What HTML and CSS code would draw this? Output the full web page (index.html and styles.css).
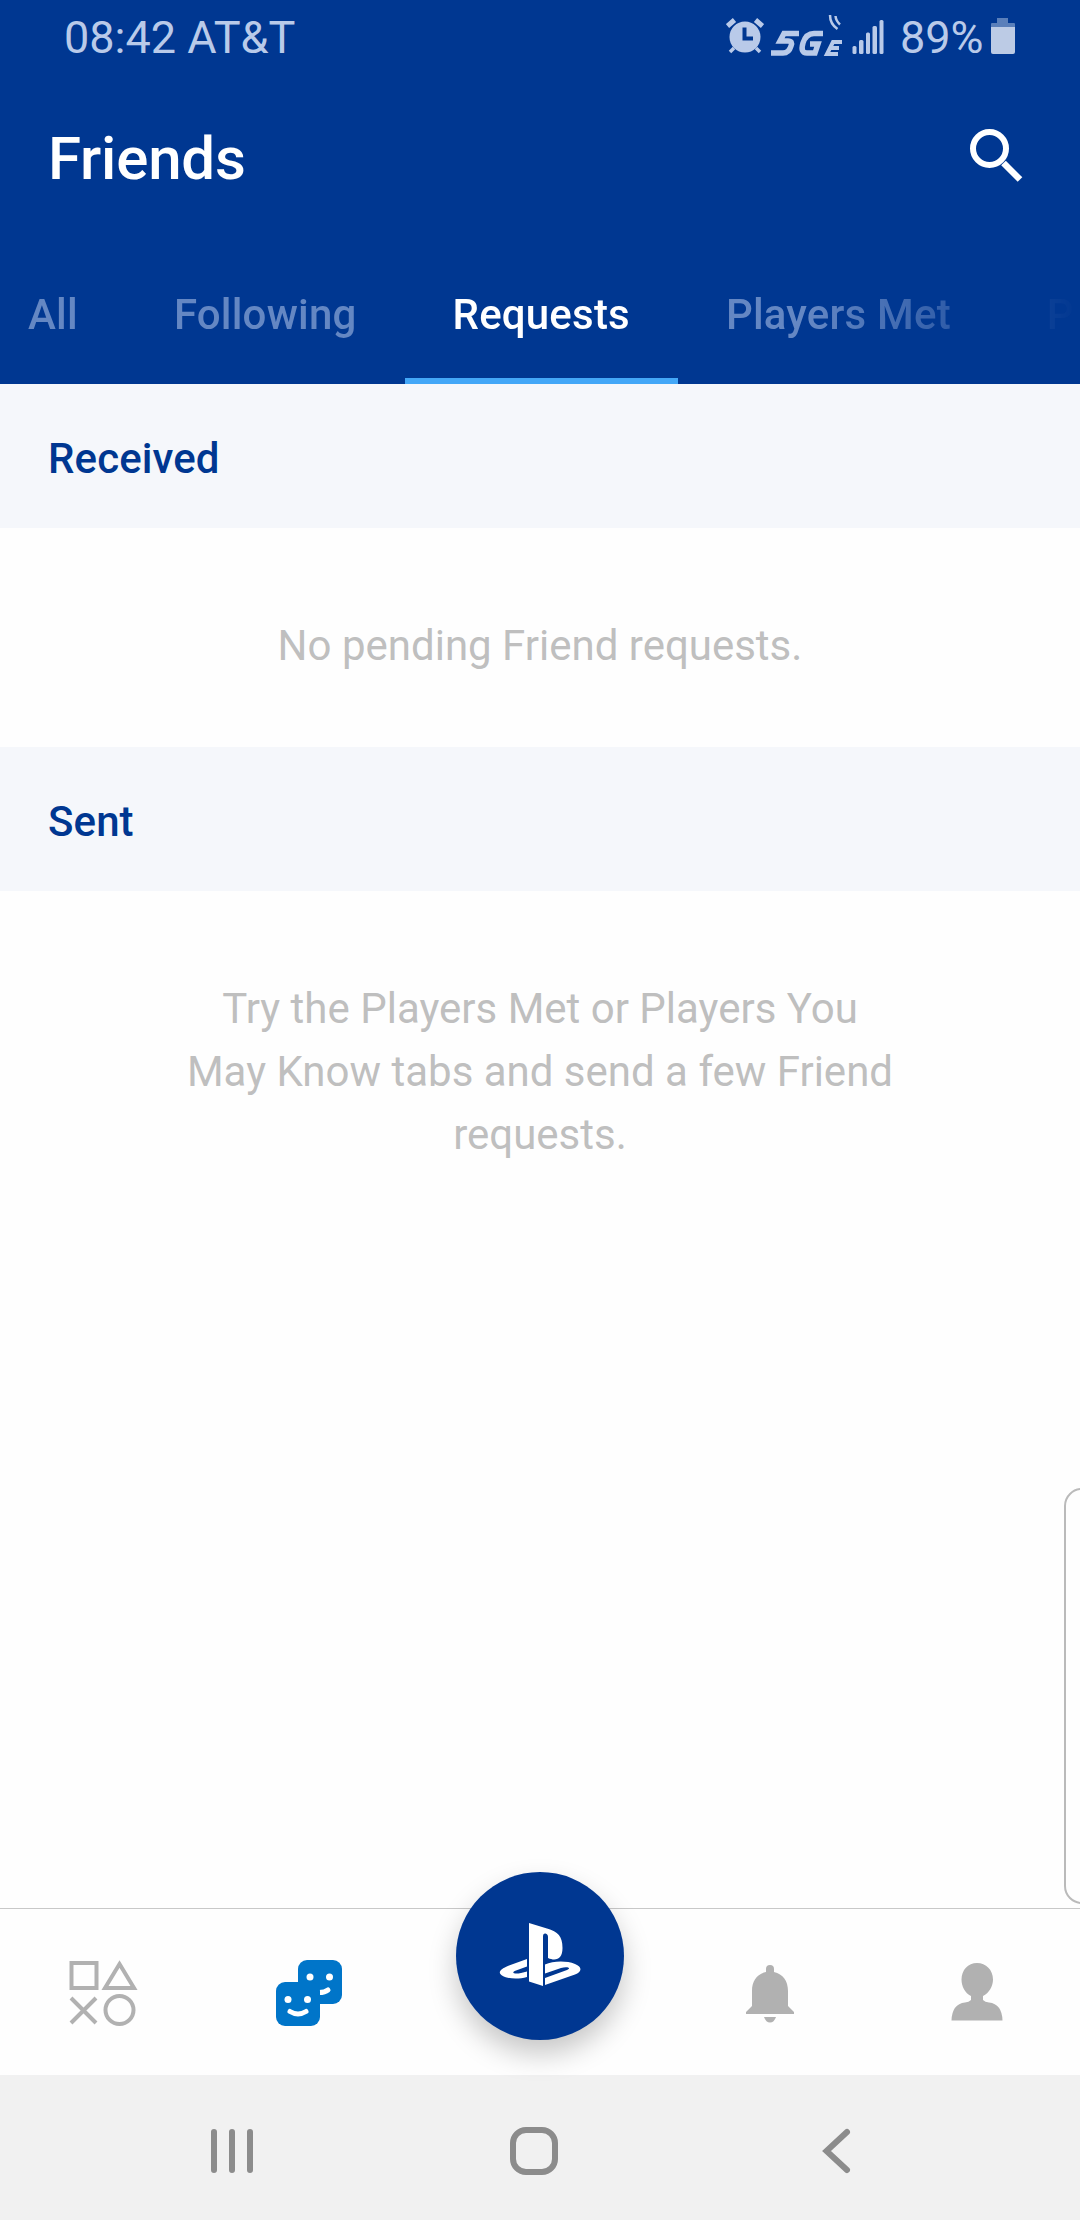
FILE: index.html
```
<!DOCTYPE html>
<html lang="en">
<head>
    <meta charset="UTF-8">
    <meta name="viewport" content="width=device-width, initial-scale=1.0">
    <title>Friends</title>
    <link rel="stylesheet" href="styles.css">
</head>
<body>
    <div class="app">
        <header class="header">
            <div class="status-bar">
                <span class="status-text">08:42 AT&amp;T</span>
                <div class="status-icons">
                    <svg class="alarm-icon" width="38" height="36" viewBox="0 0 38 36">
                        <path d="M1.500 8L8.500 2M29.500 2l7 6" stroke="#b9cae9" stroke-width="5"/>
                        <path d="M8 30l-4 4M30 30l4 4" stroke="#b9cae9" stroke-width="3.5"/>
                        <circle cx="19" cy="19" r="15.5" fill="#b9cae9"/>
                        <path d="M18.5 9.500v11H27" fill="none" stroke="#003791" stroke-width="4"/>
                    </svg>
                    <svg class="network-icon" width="74" height="42" viewBox="0 0 74 42">
                        <g fill="none" stroke="#b9cae9" stroke-width="5.500">
                            <path d="M28 18.500H13L9 26H17Q22 26 20 31Q18 38 12 38H0"/>
                            <path d="M52 18.500H43Q35 18.500 32 28Q29 38 36 38H44L47 29H39"/>
                        </g>
                        <path d="M71 27H62L56 39H67M59 33H68" fill="none" stroke="#b9cae9" stroke-width="4"/>
                        <path d="M59 0Q59 9 66.500 14M64.500 1Q65 6 69 9.500" fill="none" stroke="#b9cae9" stroke-width="2.500"/>
                    </svg>
                    <svg class="signal-icon" width="32" height="36" viewBox="0 0 32 36">
                        <g fill="#b9cae9">
                            <rect x="0.500" y="27" width="4" height="8" rx="1.500"/>
                            <rect x="7" y="21" width="4.500" height="14" rx="1.500"/>
                            <rect x="14" y="13.500" width="4" height="21.500" rx="1.500"/>
                            <rect x="20.500" y="7" width="4.500" height="28" rx="1.500"/>
                            <rect x="27.500" y="1" width="4" height="34" rx="1.500"/>
                        </g>
                    </svg>
                    <span class="status-text battery-text">89%</span>
                    <svg class="battery-icon" width="24" height="36" viewBox="0 0 24 36">
                        <path d="M6 0h11v5h6a1 1 0 0 1 1 1v3H0V6a1 1 0 0 1 1-1h5z" fill="#5a7fba"/>
                        <path d="M0 9h24v25a2 2 0 0 1-2 2H2a2 2 0 0 1-2-2z" fill="#bccbe5"/>
                    </svg>
                </div>
            </div>

            <div class="title-bar">
                <h1>Friends</h1>
                <svg class="search-icon" width="54" height="54" viewBox="0 0 54 54">
                    <circle cx="19.500" cy="19.500" r="16.500" fill="none" stroke="#fff" stroke-width="6"/>
                    <path d="M33.500 34L50 50.500" stroke="#fff" stroke-width="6.500"/>
                </svg>
            </div>

            <nav class="tabs">
                <a class="tab">All</a>
                <a class="tab">Following</a>
                <a class="tab active">Requests</a>
                <a class="tab">Players Met</a>
                <a class="tab">Players You May Know</a>
            </nav>
        </header>

        <main class="content">
            <h2 class="section-title">Received</h2>
            <p class="empty-text">No pending Friend requests.</p>
            <h2 class="section-title">Sent</h2>
            <p class="empty-text">Try the Players Met or Players You May Know tabs and send a few Friend requests.</p>
        </main>

        <!-- edge panel handle -->
        <div class="edge-handle"></div>

        <nav class="bottom-nav">
            <svg class="nav-shapes" width="70" height="68" viewBox="0 0 70 68">
                <g fill="none" stroke="#b1b1b1" stroke-width="4">
                    <rect x="3.500" y="3" width="25" height="25"/>
                    <path d="M51.500 4L66 28H37z"/>
                    <path d="M3 38L28 63M28 38L3 63"/>
                    <circle cx="51.500" cy="50" r="14"/>
                </g>
            </svg>
            <svg class="nav-friends" width="68" height="68" viewBox="0 0 68 68">
                <rect x="23" y="1" width="44" height="44" rx="9" fill="#0075c9"/>
                <circle cx="35" cy="18" r="3.500" fill="#fff"/>
                <circle cx="54.500" cy="18" r="3.500" fill="#fff"/>
                <path d="M44 33.500Q50 33.500 53 31" fill="none" stroke="#fff" stroke-width="5" stroke-linecap="round"/>
                <rect x="1" y="23" width="44" height="44" rx="9" fill="#0075c9"/>
                <circle cx="13" cy="40.500" r="3.500" fill="#fff"/>
                <circle cx="32.500" cy="40.500" r="3.500" fill="#fff"/>
                <path d="M15 52.500Q23 57.500 31 52.500" fill="none" stroke="#fff" stroke-width="5" stroke-linecap="round"/>
            </svg>
            <div class="ps-button">
                <svg width="82" height="64" viewBox="0 0 82 64" fill="#fff">
                    <path d="M30 0L48 5.500C59 9 63.500 13 63.500 25C63.500 36 57 38.500 49 35V14Q49 11 46.500 10.500Q44 10 44 13V63L30 58.500z"/>
                    <path d="M28 36L10 42.500C0 46.500-1 50 3 52.500C9 56 19 56.500 28 54V48.500L22 50C16 51.500 11 50 17 47.500L28 43.500z"/>
                    <path d="M46 41.500C54 38 67 37.500 76 41C84 44 82.500 49 76 51.500L46 62V55L68 47C73 45 68 43 62 45L46 50.500z"/>
                </svg>
            </div>
            <svg class="nav-bell" width="48" height="60" viewBox="0 0 48 60" fill="#b1b1b1">
                <path d="M20 8V5a4 4 0 0 1 8 0v3C37 10 42 17 42 27V42L48 48V50H0V48L6 42V27C6 17 11 10 20 8z"/>
                <path d="M18 53H30Q28 58.500 24 58.500Q20 58.500 18 53z"/>
            </svg>
            <svg class="nav-profile" width="52" height="58" viewBox="0 0 52 58" fill="#b1b1b1">
                <path d="M26 0C35 0 42 7 42 16.500C42 23.500 38 30 32 33V37Q34 39 38 39.500Q51 41 51.500 57.500H.5Q1 41 14 39.500Q18 39 20 37V33C14 30 10.500 23.500 10.500 16.500C10.500 7 17 0 26 0z"/>
            </svg>
        </nav>

        <footer class="system-nav">
            <svg width="44" height="48" viewBox="0 0 44 48">
                <path d="M4 5V43M22 5V43M40 5V43" stroke="#8c8c8c" stroke-width="6" stroke-linecap="round"/>
            </svg>
            <svg class="home-icon" width="48" height="48" viewBox="0 0 48 48">
                <rect x="3" y="3" width="42" height="42" rx="13" fill="none" stroke="#8c8c8c" stroke-width="6"/>
            </svg>
            <svg width="30" height="48" viewBox="0 0 30 48">
                <path d="M25 5L4.500 24L25 43" fill="none" stroke="#8c8c8c" stroke-width="6" stroke-linecap="round"/>
            </svg>
        </footer>
    </div>
</body>
</html>
```
FILE: styles.css
```
* {
    box-sizing: border-box;
}

body {
    margin: 0;
    background: #fefefe;
    font-family: Roboto, sans-serif;
    overflow: hidden;
}

svg {
    display: block;
    flex-shrink: 0;
}

.app {
    position: relative;
    display: flex;
    flex-direction: column;
    width: 1080px;
    height: 2220px;
}

.header {
    display: flex;
    flex-direction: column;
    height: 384px;
    background: #003791;
    color: white;
}

.status-bar {
    display: flex;
    justify-content: space-between;
    height: 74px;
    padding: 0 65px 0 64px;
}

.status-text {
    padding-top: 11px;
    font-size: 45px;
    line-height: 53px;
    color: #b9cae9;
}

.status-icons {
    display: flex;
}

.alarm-icon {
    margin: 18px 7px 0 0;
}

.network-icon {
    margin: 15px 7px 0 0;
}

.signal-icon {
    margin: 19px 16px 0 0;
}

.battery-text {
    width: 82px;
}

.battery-icon {
    margin: 18px 0 0 9px;
}

.title-bar {
    display: flex;
    justify-content: space-between;
    align-items: flex-start;
    height: 168px;
    padding: 50px 56px 0 48px;
}

h1 {
    margin: 0;
    font-size: 60px;
    font-weight: 500;
    line-height: 70px;
    letter-spacing: -0.2px;
}

.search-icon {
    margin-top: 5px;
}

.tabs {
    display: flex;
    height: 142px;
    margin-left: -20px;
    overflow: hidden;
    /* tabs fade out on the right edge */
    mask-image: linear-gradient(to right, #000 830px, transparent 1098px);
}

.tab {
    flex-shrink: 0;
    padding: 48px 48px 0;
    font-size: 42px;
    font-weight: 500;
    line-height: 50px;
    letter-spacing: 0.2px;
    white-space: nowrap;
    color: #6487c3;
}

.tab.active {
    border-bottom: 6px solid #43a7f7;
    color: white;
}

.content {
    height: 1524px;
}

.section-title {
    height: 144px;
    margin: 0;
    padding: 50px 48px 0;
    background: #f5f7fb;
    color: #003791;
    font-size: 42px;
    font-weight: 500;
    line-height: 50px;
    letter-spacing: 0.1px;
}

.empty-text {
    margin: 0;
    padding: 86px 180px 70px;
    color: #bfbfbf;
    font-size: 42px;
    line-height: 63px;
    text-align: center;
}

.edge-handle {
    position: absolute;
    top: 1488px;
    right: -20px;
    width: 36px;
    height: 416px;
    border: 2px solid #bababa;
    border-radius: 20px;
}

.bottom-nav {
    position: relative;
    display: flex;
    height: 167px;
    border-top: 1px solid #c8c8c8;
}

.nav-shapes {
    margin: 51px 0 0 68px;
}

.nav-friends {
    margin: 50px 0 0 137px;
}

/* sits over the top edge of the nav */
.ps-button {
    position: absolute;
    top: -37px;
    left: 456px;
    display: flex;
    justify-content: center;
    align-items: center;
    width: 168px;
    height: 168px;
    padding-bottom: 2px;
    border-radius: 50%;
    background: #003791;
    box-shadow: 0 14px 28px rgba(0, 0, 0, 0.22);
}

.nav-bell {
    margin: 55px 0 0 403px;
}

.nav-profile {
    margin: 54px 0 0 157px;
}

.system-nav {
    display: flex;
    justify-content: space-between;
    align-items: center;
    height: 145px;
    padding: 7px 228px 0 210px;
    background: #f1f1f1;
}

.home-icon {
    margin-right: 8px;
}
```
